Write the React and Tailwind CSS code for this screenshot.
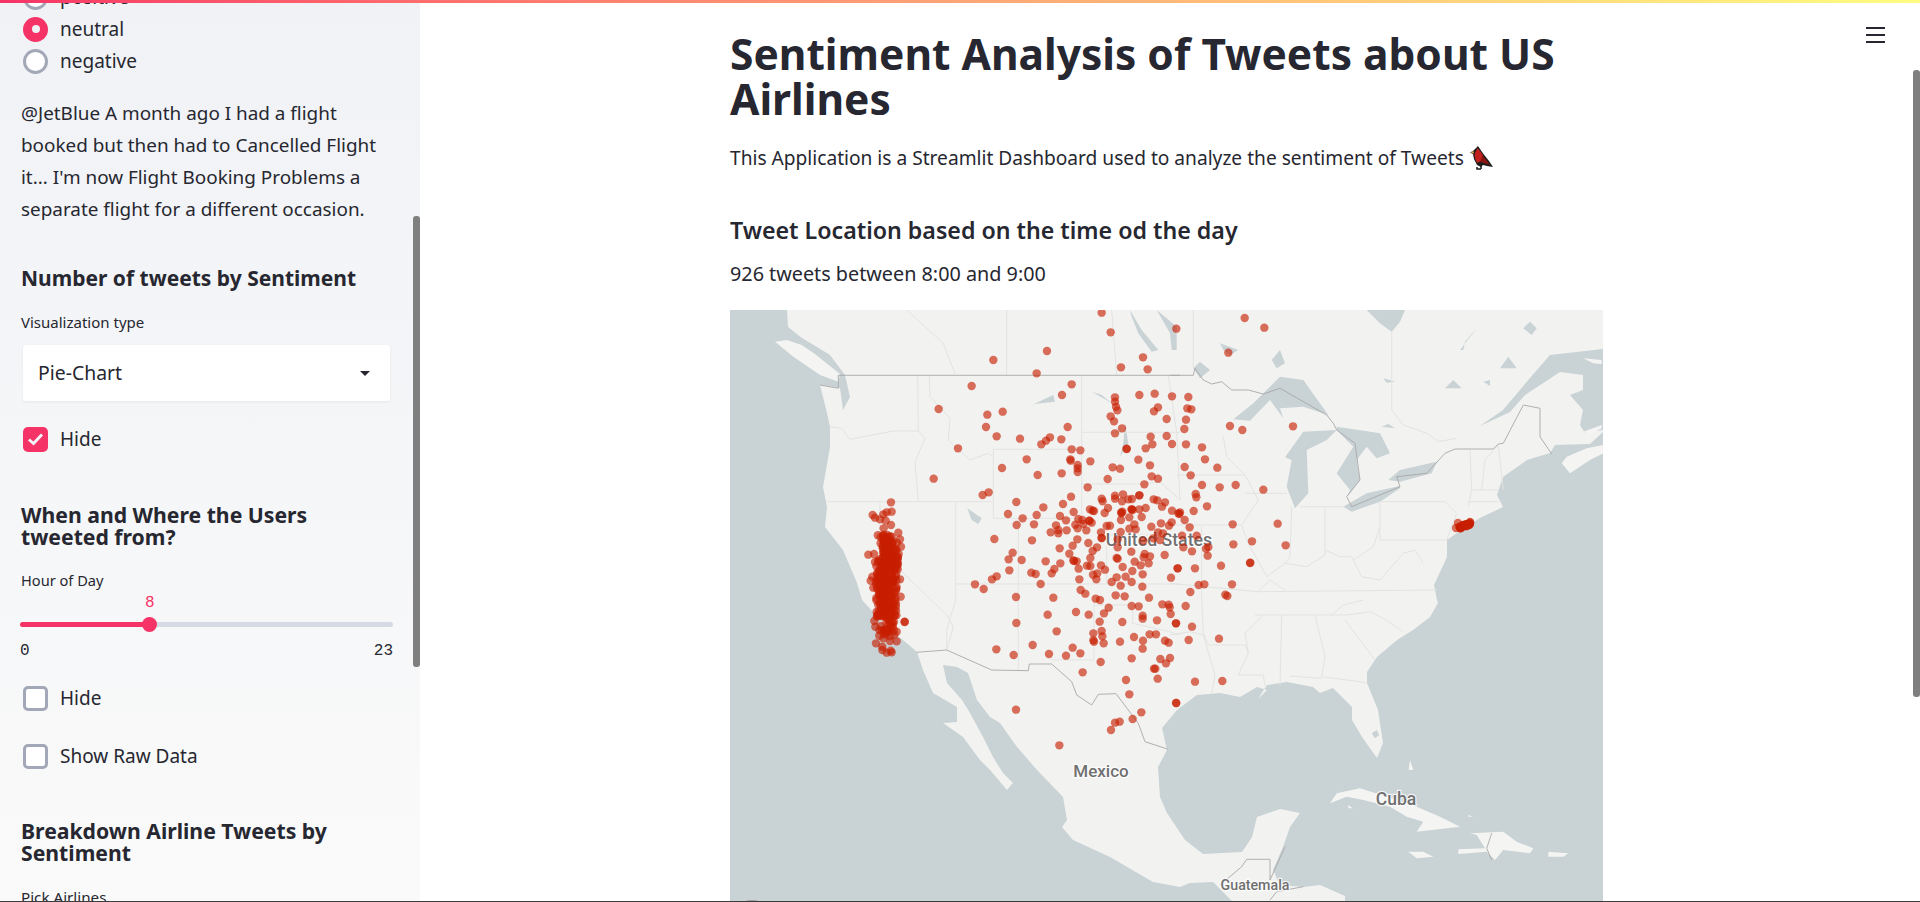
import React from "react";

const z5 = [730, 300], z6 = [1170, 300], z7 = [730, 600], z8 = [1170, 600], z10 = [840, 480];
const conv = (o, a) => a.map(([x, y]) => [o[0] + x / 3, o[1] + y / 3]);
const pts = (a) => a.map(([x, y]) => `${x.toFixed(1)},${y.toFixed(1)}`).join(" ");

const land = [[787,310],[788,327],[802,338],[817,347],[830,355],[845,375],[850,397],[843,410],[840,388],[820,385],[827,413],[830,427],[830,447],[823,487],[827,507],[825,527],[843,550],[857,583],[862,600],[873,612],[890,630],[903,640],[917,652],[923,670],[933,693],[957,707],[957,722],[943,723],[963,737],[980,760],[990,770],[1007,790],[1013,783],[1003,773],[993,757],[983,737],[970,713],[962,700],[947,683],[943,665],[957,667],[968,673],[977,700],[990,717],[1000,723],[1017,747],[1037,770],[1063,797],[1067,820],[1062,827],[1073,840],[1110,857],[1153,882],[1180,887],[1190,883],[1213,882],[1233,902],[1345,902],[1345,896],[1320,885],[1303,887],[1280,885],[1273,870],[1283,847],[1290,827],[1300,813],[1280,809],[1257,817],[1252,837],[1242,852],[1203,854],[1185,840],[1167,813],[1160,797],[1158,767],[1167,750],[1162,728],[1177,710],[1197,695],[1220,693],[1240,697],[1257,687],[1267,690],[1258,699],[1267,685],[1287,682],[1313,687],[1320,693],[1333,688],[1352,707],[1352,720],[1362,737],[1377,758],[1383,743],[1378,710],[1367,683],[1367,672],[1377,657],[1397,640],[1413,630],[1430,617],[1438,603],[1437,600],[1434,585],[1447,557],[1447,540],[1457,533],[1480,518],[1503,507],[1497,495],[1503,477],[1527,460],[1550,453],[1555,445],[1590,444],[1603,432],[1603,310]];

const gulf = [[1480,426],[1503,410],[1530,378],[1550,355],[1603,349],[1603,430],[1585,433],[1580,425],[1583,410],[1570,395],[1583,390],[1583,375],[1560,372],[1525,395],[1510,412]];
const water = [
  conv(z6,[[190,358],[250,310],[330,230],[400,240],[475,345],[400,320],[330,325],[340,355],[300,300],[240,362]]),
  conv(z6,[[345,472],[400,395],[500,390],[470,420],[410,450],[415,580],[375,625],[350,560],[365,480]]),
  conv(z6,[[500,380],[630,400],[660,460],[620,475],[590,440],[560,480],[570,540],[530,590],[540,570],[500,520],[550,440],[500,390]]),
  conv(z6,[[520,620],[590,580],[690,558],[690,565],[630,605],[545,635]]),
  conv(z6,[[655,540],[690,510],[800,485],[785,520],[690,545]]),
  conv(z6,[[590,30],[705,30],[690,65],[665,95],[630,70]]),
  conv(z6,[[150,130],[205,150],[180,165],[160,150]]),
  conv(z6,[[305,180],[330,150],[345,190],[320,205]]),
  conv(z6,[[70,205],[90,185],[120,210],[90,235]]),
  conv(z6,[[870,150],[920,85],[885,125],[880,150]]),
  conv(z6,[[990,205],[1015,170],[1040,205]]),
  conv(z6,[[825,265],[850,240],[875,265]]),
  conv(z6,[[940,245],[960,240],[960,258]]),
  conv(z6,[[640,235],[675,245],[650,248]]),
  conv(z6,[[635,380],[655,372],[675,385]]),
  conv(z6,[[1060,85],[1080,65],[1100,85],[1085,105]]),
  conv(z5,[[1200,30],[1235,90],[1285,150],[1265,155],[1225,100],[1205,50]]),
  conv(z5,[[1280,30],[1340,80],[1340,150],[1325,150],[1320,100]]),
  conv(z5,[[712,625],[755,655],[745,672],[725,660]]),
  conv(z5,[[905,315],[970,285],[975,305],[910,312]]),
  conv(z5,[[1085,275],[1115,285],[1145,310],[1120,295]]),
  conv(z5,[[1185,370],[1195,430],[1170,470],[1180,430]]),
  conv(z8,[[605,400],[620,390],[628,405],[615,415]]),
];
const islands = [
  conv(z8,[[480,610],[500,580],[570,565],[650,590],[740,620],[810,650],[870,680],[740,695],[760,665],[710,650],[660,620],[580,600],[530,590]]),
  conv(z8,[[900,700],[1000,695],[1040,725],[1090,745],[1080,760],[1000,750],[975,780],[950,755],[865,762],[865,748],[945,745],[920,705]]),
  conv(z8,[[715,755],[760,755],[790,770],[740,775]]),
  conv(z8,[[1135,755],[1195,760],[1180,770],[1135,770]]),
  conv(z8,[[720,480],[730,510],[716,510]]),
  conv(z8,[[535,615],[548,625],[535,625]]),
  conv(z8,[[895,645],[910,650],[895,650]]),
  conv(z6,[[1175,490],[1200,520],[1260,480],[1300,460],[1300,435],[1250,445],[1190,470]]),
  conv(z5,[[135,125],[170,120],[215,135],[255,162],[330,222],[325,245],[270,225],[190,170]]),
];
const gulfIslands = [
  conv(z6,[[1240,175],[1295,180],[1295,192],[1270,190]]),
  conv(z6,[[1240,395],[1295,375],[1295,385],[1260,405]]),
];
const countryLines = [
  conv(z5,[[270,255],[325,265],[325,226],[1350,226]]),
  conv(z6,[[0,226],[70,226],[75,205],[100,240],[125,252],[155,245],[185,270],[235,270],[280,282],[330,265],[470,345],[490,370],[500,390],[555,430],[570,540],[530,590],[545,620],[690,560],[680,530],[770,520],[825,460],[855,447],[970,447],[985,432],[1000,430],[1060,315],[1110,325],[1110,410],[1145,462]]),
  conv(z7,[[560,157],[650,150],[785,210],[895,212],[898,192],[965,192],[1025,245],[1040,285],[1085,315],[1105,283],[1158,281],[1225,370],[1245,425],[1315,448]]),
  conv(z8,[[215,800],[230,778],[300,778],[300,840]]),
  conv(z8,[[150,855],[215,800]]),
  conv(z8,[[300,840],[345,740]]),
  conv(z8,[[965,700],[950,745],[965,780]]),
  conv(z8,[[300,900],[320,875],[400,860]]),
];
const stateLines = [
  conv(z5,[[300,380],[335,385],[360,418],[490,393],[565,393]]),
  conv(z5,[[563,226],[565,393],[585,415],[555,485],[565,605]]),
  conv(z5,[[290,605],[790,605]]),
  conv(z5,[[598,226],[600,290],[660,355],[655,420],[720,480],[775,460],[790,470]]),
  conv(z5,[[790,448],[1055,448],[1055,655],[790,655],[790,448]]),
  conv(z5,[[1055,226],[1055,448]]),
  conv(z5,[[1055,397],[1350,397]]),
  conv(z5,[[1055,552],[1240,552],[1290,545],[1350,600]]),
  conv(z5,[[677,605],[677,900]]),
  conv(z5,[[865,655],[865,900]]),
  conv(z5,[[675,852],[1350,852]]),
  conv(z5,[[1130,705],[1350,705]]),
  conv(z5,[[1130,705],[1130,852]]),
  conv(z5,[[1315,226],[1340,397],[1350,600]]),
  conv(z5,[[530,30],[640,130],[675,222]]),
  conv(z5,[[830,30],[830,226]]),
  conv(z5,[[1145,30],[1160,226]]),
  conv(z10,[[120,67],[120,185],[180,270],[320,405],[340,440],[320,510]]),
  conv(z7,[[677,0],[650,90],[650,150]]),
  conv(z7,[[865,0],[865,210]]),
  conv(z7,[[960,180],[1092,180],[1092,0]]),
  conv(z7,[[1090,15],[1208,15],[1208,70],[1320,95],[1350,105]]),
  conv(z6,[[70,30],[70,205]]),
  conv(z6,[[665,95],[665,330],[700,375],[770,400],[805,425],[860,415]]),
  conv(z6,[[20,525],[225,525],[265,600],[215,675],[0,675]]),
  conv(z6,[[160,410],[170,470],[225,525]]),
  conv(z6,[[225,580],[350,580]]),
  conv(z6,[[215,675],[235,730],[290,830],[345,790],[360,770],[365,620]]),
  conv(z6,[[390,620],[520,620]]),
  conv(z6,[[465,620],[465,765],[410,800],[345,790]]),
  conv(z6,[[465,750],[510,770],[545,770],[575,830],[630,840],[700,760],[735,750],[760,790]]),
  conv(z6,[[630,605],[825,605],[860,640],[830,720],[630,720],[630,605]]),
  conv(z6,[[630,680],[610,740],[550,780]]),
  conv(z6,[[900,450],[905,570],[895,620]]),
  conv(z6,[[895,605],[985,605]]),
  conv(z6,[[905,570],[985,570]]),
  conv(z6,[[935,570],[945,480],[985,435],[1000,570]]),
  conv(z6,[[0,850],[265,875],[800,870]]),
  conv(z6,[[95,680],[95,900]]),
  conv(z6,[[265,875],[300,840],[345,870]]),
  conv(z8,[[95,0],[100,100],[115,135],[225,135],[235,160],[205,225],[280,225],[285,260]]),
  conv(z8,[[0,105],[60,95],[100,105],[135,225],[125,280]]),
  conv(z8,[[335,45],[330,255]]),
  conv(z8,[[435,45],[465,170],[455,230],[570,245],[590,250]]),
  conv(z8,[[255,45],[530,45],[600,35],[640,55],[700,95]]),
  conv(z8,[[280,45],[225,100],[235,160]]),
  conv(z8,[[525,60],[615,180]]),
  conv(z8,[[360,228],[455,235]]),
  conv(z8,[[485,45],[520,15],[580,0]]),
];

const d5 = [[1115,38],[1142,97],[1339,86],[951,153],[790,180],[1239,172],[1173,202],[1253,208],[920,220],[725,258],[1025,253],[996,285],[1155,292],[1155,305],[1158,320],[1162,331],[1228,285],[1274,281],[1326,289],[1284,322],[1272,334],[626,327],[818,335],[772,344],[1142,349],[1152,364],[1310,357],[768,381],[1013,381],[1176,385],[1155,400],[800,409],[870,416],[960,412],[948,422],[934,433],[994,418],[1262,410],[1310,408],[1267,433],[1326,432],[684,445],[1025,448],[1051,451],[1190,446],[1190,447],[1247,445],[890,478],[1021,478],[1022,482],[1081,484],[1225,479],[1043,495],[1043,505],[1043,516],[1148,502],[1170,506],[1260,496],[816,504],[923,525],[995,520],[1133,537],[1265,529],[1284,536],[611,536],[1243,553],[1073,562],[758,585],[776,577],[1023,590],[1155,587],[1179,583],[1228,586],[1228,586],[1115,596],[1118,604],[1155,596],[1176,604],[1195,598],[1206,597],[1271,598],[1282,601],[1305,607],[1296,620],[859,606],[999,612],[940,622],[1134,624],[1080,628],[1088,632],[1092,633],[1205,628],[1205,628],[1208,630],[1228,628],[1247,624],[1174,637],[1174,640],[1177,635],[1124,639],[1031,636],[1326,632],[1345,640],[834,642],[920,645],[990,648],[878,655],[1008,661],[1045,657],[1057,660],[1078,662],[1078,662],[1085,668],[1198,652],[1235,651],[860,675],[912,673],[978,676],[1036,674],[1060,672],[1130,678],[1140,677],[1173,660],[1213,673],[1264,680],[1293,670],[1325,667],[1317,677],[1043,685],[1069,691],[1010,691],[985,690],[985,700],[962,697],[1198,686],[1217,688],[1172,696],[1113,697],[1284,697],[1299,700],[1042,718],[1115,714],[1115,714],[1163,718],[1270,715],[1240,722],[1290,720],[1075,729],[1028,737],[906,721],[793,717],[989,745],[1101,742],[1088,753],[1163,742],[1204,755],[848,758],[1018,761],[1081,774],[1160,774],[1163,776],[1244,762],[1260,769],[1304,765],[1241,772],[1214,785],[836,778],[875,780],[947,784],[1030,781],[1032,783],[1040,784],[991,790],[1256,790],[1232,796],[1071,797],[1081,798],[1113,796],[1046,806],[1178,801],[1125,809],[973,807],[838,811],[1207,813],[1343,805],[965,820],[904,818],[917,822],[1102,820],[1089,824],[1238,823],[800,829],[786,838],[1048,838],[1099,838],[1160,832],[1187,830],[1145,846],[1205,846],[1323,833],[932,852],[735,853],[761,867],[1172,857],[1237,860],[1052,870],[1066,881],[1157,886],[1184,889],[858,891],[970,893],[1257,893],[1097,896],[1110,900]];
const d6 = [[224,54],[283,83],[175,158],[55,291],[52,325],[64,328],[48,359],[43,387],[180,378],[217,390],[369,379],[48,433],[96,442],[105,478],[44,501],[142,503],[62,526],[96,555],[149,562],[197,555],[280,569],[77,582],[79,592],[111,619],[30,637],[28,642],[71,633],[44,660],[188,673],[323,671],[59,682],[36,707],[80,707],[190,733],[246,724],[347,736],[40,742],[66,754],[115,741],[108,746],[113,767],[241,788],[240,789],[153,797],[23,805],[75,805],[86,855],[103,853],[186,853],[61,876],[166,884],[172,888]];
const d7 = [[524,66],[859,69],[953,44],[1038,36],[1076,44],[1136,23],[1122,40],[1109,65],[1177,66],[1205,18],[1226,19],[1297,13],[1316,14],[1322,42],[1319,22],[1238,47],[1238,56],[1281,61],[1338,70],[980,94],[1090,100],[1115,93],[1117,109],[1090,121],[1092,125],[1121,130],[1170,125],[1212,111],[1239,122],[1259,103],[1278,103],[1305,122],[1316,128],[1238,146],[908,135],[799,148],[851,165],[957,162],[1008,167],[1028,143],[1051,160],[1112,186],[1205,175],[1291,177],[1320,174],[1308,190],[1272,206],[1276,206],[1283,236],[1058,217],[1188,240],[1198,283],[1339,309],[1234,337],[1208,357],[1155,368],[1169,365],[1143,390],[858,329],[988,436]];
const d8 = [[47,18],[18,70],[66,80],[147,116],[56,120],[75,245],[157,243],[18,309]];
const d10 = [[153,67],[155,95],[140,97],[130,103],[98,105],[105,113],[120,118],[137,122],[153,135],[131,145],[175,158],[180,178],[183,200],[176,222],[85,224],[102,222],[105,246],[97,290],[92,302],[100,323],[180,298],[182,350],[194,425],[103,423],[106,440],[118,450],[170,484],[108,490],[127,500],[127,510],[140,518],[152,512],[155,517],[150,483],[130,475],[170,455],[140,455],[110,395]];

const cluster = [];
let seed = 7;
const rnd = () => { seed = (seed * 16807) % 2147483647; return seed / 2147483647; };
const band = (n, y0, y1, c0, c1, hw) => {
  for (let i = 0; i < n; i++) {
    const t = rnd();
    const c = c0 + (c1 - c0) * t;
    cluster.push([c + (rnd() + rnd() - 1) * hw, y0 + (y1 - y0) * t]);
  }
};
band(70, 165, 240, 135, 148, 32);
band(110, 235, 310, 148, 138, 36);
band(150, 305, 410, 138, 140, 34);
band(30, 405, 470, 138, 142, 36);

const ny = [];
for (let i = 0; i < 40; i++) { const t = rnd(); ny.push([1458 + t * 12 + rnd() * 2, 527 - t * 5 + rnd() * 2]); }
ny.push([1458, 523], [1470, 522], [1456, 528]);

const dots = [...conv(z5, d5), ...conv(z6, d6), ...conv(z7, d7), ...conv(z8, d8), ...conv(z10, d10), ...conv(z10, cluster), ...ny];

function MapLabel({ x, y, size, children }) {
  return (
    <text x={x} y={y} fontSize={size} fontFamily="Roboto, sans-serif" fontWeight="500" fill="#707070" stroke="#ffffff" strokeOpacity="0.75" strokeWidth="2.5" paintOrder="stroke" textAnchor="middle" dominantBaseline="middle">{children}</text>
  );
}

function TweetMap() {
  return (
    <svg width="873" height="592" viewBox="730 310 873 592" className="block">
      <rect x="730" y="310" width="873" height="592" fill="#c9d2d5" />
      <polygon points={pts(land)} fill="#f2f2f1" />
      {islands.map((p, i) => <polygon key={i} points={pts(p)} fill="#f4f4f3" />)}
      <polygon points={pts(gulf)} fill="#c9d2d5" />
      {gulfIslands.map((p, i) => <polygon key={i} points={pts(p)} fill="#f4f4f3" />)}
      {water.map((p, i) => <polygon key={i} points={pts(p)} fill="#c9d2d5" />)}
      {stateLines.map((p, i) => <polyline key={i} points={pts(p)} fill="none" stroke="#e3e3e1" strokeWidth="1" />)}
      {countryLines.map((p, i) => <polyline key={i} points={pts(p)} fill="none" stroke="#a8a8a8" strokeWidth="0.9" />)}
      <MapLabel x={1159} y={541} size={17.7}>United States</MapLabel>
      <MapLabel x={1101} y={773} size={17}>Mexico</MapLabel>
      <MapLabel x={1396} y={800} size={17.5}>Cuba</MapLabel>
      <MapLabel x={1255} y={886} size={14.2}>Guatemala</MapLabel>
      {dots.map(([x, y], i) => <circle key={i} cx={x} cy={y} r="4.2" fill="rgb(200,30,0)" fillOpacity="0.63" />)}
      <path d="M742 902 q10 -4 20 0 z" fill="#9a9a9a" />
    </svg>
  );
}

function Bird() {
  return (
    <svg width="24" height="24" viewBox="0 0 24 24" className="ml-[6px] inline-block shrink-0">
      <path d="M8 0 L10 3 L12 6 L15 10 L19 15 L23 21 L17 20 L13 19 L11 21 L7 19 L4 13 L3 8 L0 6.500 L3 5 L5 3 Z" fill="#1d1d1d" />
      <path d="M7.500 2 L10 5 L13 9 L11 15 L7 17 L5 12 L4.500 8 L6 5 Z" fill="#c1201c" />
      <path d="M13 10 L17 15 L20 19 L14 17 L10 16 Z" fill="#8a1512" />
      <path d="M0.800 6.500 L3.500 5 L4 7.500 Z" fill="#e8b23a" />
      <path d="M7 21 L7 23 L11 23 M11 20 L11 23" fill="none" stroke="#1d1d1d" strokeWidth="1.500" />
    </svg>
  );
}

function Radio({ label, on }) {
  return (
    <div className="flex h-[32px] items-center pl-[2px]">
      {on ? (
        <span className="flex h-[25px] w-[25px] items-center justify-center rounded-full bg-[#f63366]"><span className="h-[8px] w-[8px] rounded-full bg-[#f0f2f6]" /></span>
      ) : (
        <span className="h-[25px] w-[25px] rounded-full border-[3px] border-[#a3a8b8] bg-white" />
      )}
      <span className="ml-[12px] text-[19px]">{label}</span>
    </div>
  );
}

function Check({ label, on, className }) {
  return (
    <div className={`flex h-[32px] items-center pl-[2px] ${className}`}>
      {on ? (
        <span className="flex h-[25px] w-[25px] items-center justify-center rounded-[5px] bg-[#f63366]">
          <svg width="17" height="14" viewBox="0 0 17 14"><path d="M2 7.500 L6.500 11.500 L15 2.500" fill="none" stroke="#f3f4f8" strokeWidth="3" /></svg>
        </span>
      ) : (
        <span className="h-[25px] w-[25px] rounded-[5px] border-[3px] border-[#a3a8b8] bg-white" />
      )}
      <span className="ml-[12px] text-[19px]">{label}</span>
    </div>
  );
}

export default function App() {
  return (
    <div className="relative flex h-[902px] w-full overflow-hidden bg-white font-['Noto_Sans',sans-serif] text-[#262730]">
      <div className="absolute inset-x-0 top-0 z-10 h-[3px] bg-gradient-to-r from-[#f63366] to-[#fffd80]" />

      <aside className="h-full w-[420px] shrink-0 overflow-hidden bg-gradient-to-b from-[#f0f2f6] to-[#fafafa] pl-[21px]">
        <div className="-mt-[19px] w-[372px]">
          <Radio label="positive" />
          <Radio label="neutral" on />
          <Radio label="negative" />
          <p className="mt-[20px] whitespace-nowrap text-[18.9px] leading-[32px]">
            @JetBlue A month ago I had a flight<br />
            booked but then had to Cancelled Flight<br />
            it... I'm now Flight Booking Problems a<br />
            separate flight for a different occasion.
          </p>
          <h3 className="mt-[40px] text-[21px] font-bold leading-[26px] text-[#262730]">Number of tweets by Sentiment</h3>
          <div className="mt-[21px] text-[15px] leading-[20px]">Visualization type</div>
          <div className="ml-[2px] mt-[13px] flex h-[56px] w-[367px] items-center justify-between rounded-[3px] bg-white pl-[15px] pr-[20px] shadow-[0_1px_3px_rgba(0,0,0,0.06)]">
            <span className="text-[19.4px]">Pie-Chart</span>
            <span className="h-0 w-0 border-x-[5px] border-t-[5px] border-x-transparent border-t-[#262730]" />
          </div>
          <Check label="Hide" on className="mt-[22px]" />
          <h3 className="mt-[49px] whitespace-nowrap text-[21.2px] font-bold leading-[22px]">When and Where the Users<br />tweeted from?</h3>
          <div className="mt-[22px] text-[14.6px] leading-[20px]">Hour of Day</div>
          <div className="mt-[3px] pl-[124px] font-['Liberation_Mono',monospace] text-[16px] leading-[20px] text-[#f63366]">8</div>
          <div className="relative ml-[-1px] mt-[4px] flex h-[15px] w-[373px] items-center">
            <div className="h-[5px] w-[130px] rounded-l-full bg-[#f63366]" />
            <div className="h-[5px] flex-1 rounded-r-full bg-[#d6dae5]" />
            <span className="absolute left-[122px] top-0 h-[15px] w-[15px] rounded-full bg-[#f63366]" />
          </div>
          <div className="ml-[-1px] mt-[9px] flex w-[373px] justify-between font-['Liberation_Mono',monospace] text-[16px] leading-[20px]">
            <span>0</span><span>23</span>
          </div>
          <Check label="Hide" className="mt-[21px]" />
          <Check label="Show Raw Data" className="mt-[26px]" />
          <h3 className="mt-[48px] whitespace-nowrap text-[21.2px] font-bold leading-[22px]">Breakdown Airline Tweets by<br />Sentiment</h3>
          <div className="mt-[23px] text-[15.2px] leading-[20px]">Pick Airlines</div>
        </div>
      </aside>

      <main className="h-full flex-1 overflow-hidden pl-[310px] pt-[31px]">
        <h1 className="w-[860px] text-[42.5px] font-bold leading-[45px]">Sentiment Analysis of Tweets about US Airlines</h1>
        <p className="mt-[21px] flex h-[32px] items-center whitespace-nowrap text-[19.15px]">This Application is a Streamlit Dashboard used to analyze the sentiment of Tweets <Bird /></p>
        <h3 className="mt-[40px] text-[23.2px] font-semibold leading-[32px]">Tweet Location based on the time od the day</h3>
        <p className="mt-[12px] text-[19.8px] leading-[32px]">926 tweets between 8:00 and 9:00</p>
        <div className="mt-[20px]"><TweetMap /></div>
      </main>

      <div className="absolute right-[35px] top-[27px] flex w-[19px] flex-col gap-[5px]">
        <span className="h-[2px] bg-[#262730]" />
        <span className="h-[2px] bg-[#262730]" />
        <span className="h-[2px] bg-[#262730]" />
      </div>
      <div className="absolute left-[413px] top-[216px] h-[451px] w-[7px] rounded-t-[3px] rounded-b-[3px] bg-[#7f7f7f]" />
      <div className="absolute right-0 top-[70px] h-[627px] w-[7px] rounded-t-[3px] rounded-b-[3px] bg-[#7f7f7f]" />
      <div className="absolute inset-x-0 bottom-0 h-[1px] bg-[#3c3c3c]" />
    </div>
  );
}
